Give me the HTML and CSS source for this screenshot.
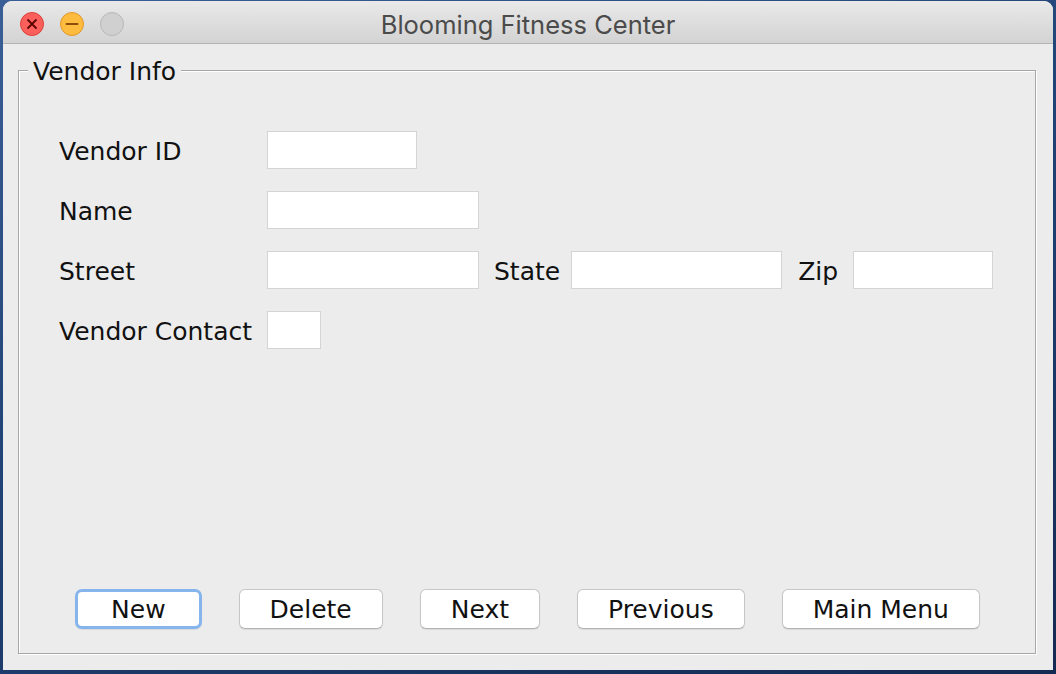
FILE: index.html
```html
<!DOCTYPE html>
<html>
<head>
<meta charset="utf-8">
<link rel="stylesheet" href="styles.css">
</head>
<body>
<div class="window">
  <div class="titlebar">
    <div class="lights">
      <span class="light close"><svg width="12" height="12" viewBox="0 0 12 12"><path d="M2 2 L10 10 M10 2 L2 10" stroke="#5a0604" stroke-width="1.8" stroke-linecap="round"/></svg></span>
      <span class="light minimize"><svg width="14" height="12" viewBox="0 0 14 12"><path d="M1.5 6 H12.5" stroke="#8c4f0a" stroke-width="2" stroke-linecap="round"/></svg></span>
      <span class="light zoom"></span>
    </div>
    <div class="title">Blooming Fitness Center</div>
    <div></div>
  </div>
  <div class="content">
    <div class="group">
      <div class="legend">Vendor Info</div>
      <div class="form">
        <div class="row">
          <label class="label">Vendor ID</label>
          <div class="field w150"></div>
        </div>
        <div class="row">
          <label class="label">Name</label>
          <div class="field w212"></div>
        </div>
        <div class="row">
          <label class="label">Street</label>
          <div class="field w212"></div>
          <label class="inline-label state">State</label>
          <div class="field w211"></div>
          <label class="inline-label zip">Zip</label>
          <div class="field w140"></div>
        </div>
        <div class="row">
          <label class="label">Vendor Contact</label>
          <div class="field w54"></div>
        </div>
      </div>
      <div class="buttons">
        <button class="btn focused">New</button>
        <button class="btn">Delete</button>
        <button class="btn">Next</button>
        <button class="btn">Previous</button>
        <button class="btn">Main Menu</button>
      </div>
    </div>
  </div>
</div>
</body>
</html>
```
FILE: styles.css
```css
* { box-sizing: border-box; }
html, body { margin: 0; padding: 0; }
body {
  width: 1056px;
  height: 674px;
  overflow: hidden;
  background: linear-gradient(160deg, #3a5f96 0%, #23457a 40%, #142a52 100%);
  padding: 1px 3px 0 3px;
  font-family: "DejaVu Sans", "Liberation Sans", sans-serif;
}
.window {
  width: 1050px;
  height: 669px;
  background: #ececec;
  border-radius: 9px 9px 0 0;
  overflow: hidden;
  display: flex;
  flex-direction: column;
}
.titlebar {
  height: 43px;
  flex: none;
  background: linear-gradient(#e9e9e9, #d3d3d3);
  border-bottom: 1px solid #b4b4b4;
  display: grid;
  grid-template-columns: 1fr auto 1fr;
  align-items: center;
}
.lights {
  display: flex;
  gap: 16px;
  padding-left: 17px;
  padding-top: 4px;
}
.light {
  width: 24px;
  height: 24px;
  border-radius: 50%;
  display: flex;
  align-items: center;
  justify-content: center;
}
.close { background: #fc605b; border: 1px solid #de3f39; }
.minimize { background: #fdbc40; border: 1px solid #dd9a2a; }
.zoom { background: #d0d0d0; border: 1px solid #b8b8b8; }
.title {
  font-family: "Inter", "Liberation Sans", sans-serif;
  font-size: 25.5px;
  color: #4b4b4b;
  padding-top: 5px;
}
.content {
  flex: 1;
  display: flex;
  padding: 26px 17px 16px 15px;
}
.group {
  flex: 1;
  position: relative;
  border: 1px solid #a6a6a6;
  box-shadow: inset 1px 1px 0 #ffffff, 1px 1px 0 #ffffff;
  display: flex;
  flex-direction: column;
}
.legend {
  position: absolute;
  top: -14px;
  left: 9px;
  padding: 0 5px;
  background: #ececec;
  font-size: 25px;
  color: #111;
  line-height: 30px;
}
.form {
  display: flex;
  flex-direction: column;
  gap: 22px;
  padding: 60px 0 0 40px;
}
.row {
  display: flex;
  align-items: center;
  height: 38px;
}
.label {
  width: 208px;
  font-size: 25px;
  color: #111;
  padding-top: 2px;
}
.inline-label {
  font-size: 25px;
  color: #111;
  padding-top: 2px;
}
.state { margin: 0 11px 0 15px; }
.zip { margin: 0 15px 0 16px; }
.field {
  height: 38px;
  background: #fff;
  border: 1px solid #d4d4d4;
}
.w150 { width: 150px; }
.w212 { width: 212px; }
.w211 { width: 211px; }
.w140 { width: 140px; }
.w54 { width: 54px; }
.buttons {
  margin-top: auto;
  display: flex;
  justify-content: center;
  gap: 37px;
  padding: 0 2px 24px 0;
}
.btn {
  height: 40px;
  padding: 0 30px;
  background: #fff;
  border: 1px solid #c6c6c6;
  border-bottom-color: #b3b3b3;
  border-radius: 6px;
  box-shadow: 0 1px 1px rgba(0,0,0,0.08);
  font-family: "DejaVu Sans", "Liberation Sans", sans-serif;
  font-size: 25px;
  color: #111;
  line-height: 1;
}
.btn.focused {
  border: 3px solid #86b4ec;
  border-radius: 7px;
  padding: 0 33px;
  margin-left: 3px;
}
```
